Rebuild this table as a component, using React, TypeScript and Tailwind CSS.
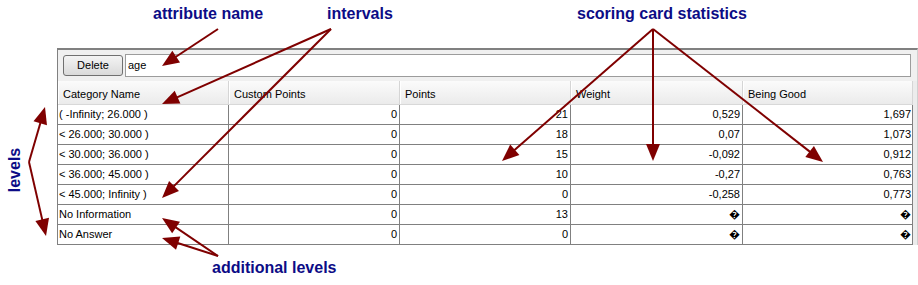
import React from 'react';

interface Row {
    name: string;
    custom: string;
    points: string;
    weight: string;
    good: string;
}

const rows: Row[] = [
    { name: '( -Infinity; 26.000 )', custom: '0', points: '21', weight: '0,529', good: '1,697' },
    { name: '< 26.000; 30.000 )', custom: '0', points: '18', weight: '0,07', good: '1,073' },
    { name: '< 30.000; 36.000 )', custom: '0', points: '15', weight: '-0,092', good: '0,912' },
    { name: '< 36.000; 45.000 )', custom: '0', points: '10', weight: '-0,27', good: '0,763' },
    { name: '< 45.000; Infinity )', custom: '0', points: '0', weight: '-0,258', good: '0,773' },
    { name: 'No Information', custom: '0', points: '13', weight: '\uFFFD', good: '\uFFFD' },
    { name: 'No Answer', custom: '0', points: '0', weight: '\uFFFD', good: '\uFFFD' },
];

const headers = ['Category Name', 'Custom Points', 'Points', 'Weight', 'Being Good'];

// arrow with a filled head at (x2, y2)
const Arrow = ({ x1, y1, x2, y2 }: { x1: number; y1: number; x2: number; y2: number }) => {
    const dx = x2 - x1;
    const dy = y2 - y1;
    const len = Math.hypot(dx, dy);
    const ux = dx / len;
    const uy = dy / len;
    const hl = 17;
    const hw = 7;
    const bx = x2 - ux * hl;
    const by = y2 - uy * hl;
    return (
        <g>
            <line x1={x1} y1={y1} x2={bx + ux * 3} y2={by + uy * 3} stroke="#7f0000" strokeWidth={2} />
            <polygon
                points={`${x2},${y2} ${bx - uy * hw},${by + ux * hw} ${bx + uy * hw},${by - ux * hw}`}
                fill="#7f0000"
            />
        </g>
    );
};

const labelCls = "absolute text-[16px] leading-[18px] font-bold text-[#0c0c86] font-['Liberation_Sans',Arial,sans-serif] whitespace-nowrap";

export default function App() {
    return (
        <div className="relative w-[918px] h-[285px] bg-white overflow-hidden font-['Liberation_Sans',Arial,sans-serif] text-[11px] text-black">
            {/* annotations */}
            <div className={`${labelCls} left-[153px] top-[5px]`}>attribute name</div>
            <div className={`${labelCls} left-[327px] top-[5px]`}>intervals</div>
            <div className={`${labelCls} left-[577px] top-[5px]`}>scoring card statistics</div>
            <div className={`${labelCls} left-[212px] top-[259px]`}>additional levels</div>
            <div className={`${labelCls} left-[-7px] top-[161px] -rotate-90`}>levels</div>

            <div className="pt-[48px] pl-[57px]">
                <div className="w-[861px] border-t-2 border-l border-[#808080] border-r border-r-[#d0d0d0] bg-[#f0f0f0]">
                    {/* toolbar */}
                    <div className="flex items-start gap-[2px] pl-[5px] pr-[6px] pt-[4px] h-[31px]">
                        <button className="mt-[1px] w-[60px] h-[21px] rounded-[3px] border border-[#707070] bg-linear-to-b from-[#f4f4f4] to-[#dadada] text-[11px] leading-none">
                            Delete
                        </button>
                        <div className="flex-1 h-[23px] border border-[#9c9c9c] bg-white flex items-center pl-[2px]">
                            age
                        </div>
                    </div>

                    {/* table */}
                    <div className="flex">
                        <div className="w-[855px]">
                            <div className="grid grid-cols-[171px_171px_171px_172px_170px] h-[24px] bg-linear-to-b from-[#fbfbfb] to-[#ebebeb] border-b border-[#d8d8d8]">
                                {headers.map((h) => (
                                    <div key={h} className="flex items-center pl-[5px] pt-[3px] border-r border-[#d5d5d5] shadow-[inset_1px_0_0_#ffffff]">
                                        {h}
                                    </div>
                                ))}
                            </div>
                            <div className="bg-white">
                                {rows.map((r) => (
                                    <div key={r.name} className="grid grid-cols-[171px_171px_171px_172px_170px] h-[20px] border-b border-[#808080]">
                                        <div className="flex items-center pl-[1px] border-r border-[#808080]">{r.name}</div>
                                        <div className="flex items-center justify-end pr-[2px] border-r border-[#808080]">{r.custom}</div>
                                        <div className="flex items-center justify-end pr-[2px] border-r border-[#808080]">{r.points}</div>
                                        <div className="flex items-center justify-end pr-[2px] border-r border-[#808080]">{r.weight}</div>
                                        <div className="flex items-center justify-end pr-[1px] border-r border-[#808080]">{r.good}</div>
                                    </div>
                                ))}
                            </div>
                        </div>
                        <div className="flex-1 bg-[#ececec]" />
                    </div>
                </div>
            </div>

            {/* arrows */}
            <svg className="absolute inset-0 pointer-events-none" width={918} height={285}>
                <Arrow x1={218} y1={29} x2={162} y2={66} />
                <Arrow x1={331} y1={29} x2={162} y2={104} />
                <Arrow x1={331} y1={29} x2={162} y2={198} />
                <Arrow x1={653} y1={29} x2={502} y2={161} />
                <Arrow x1={653} y1={29} x2={653} y2={161} />
                <Arrow x1={653} y1={29} x2={823} y2={162} />
                <Arrow x1={29} y1={162} x2={45} y2={107} />
                <Arrow x1={29} y1={162} x2={46} y2={236} />
                <Arrow x1={218} y1={256} x2={162} y2={218} />
                <Arrow x1={218} y1={256} x2={162} y2={238} />
            </svg>
        </div>
    );
}
